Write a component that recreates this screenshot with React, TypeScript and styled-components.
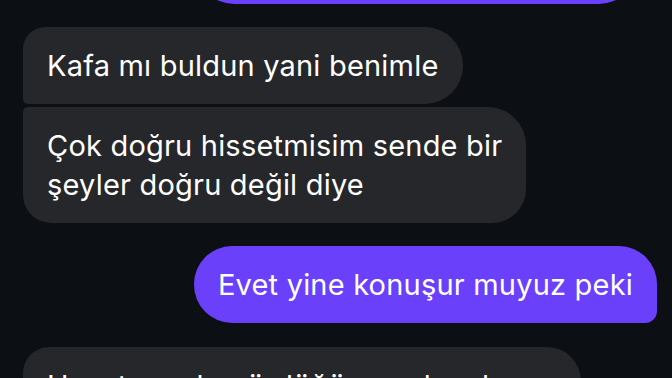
import styled, { createGlobalStyle } from "styled-components";

const GlobalStyle = createGlobalStyle`
  html, body {
    margin: 0;
    padding: 0;
    background: #0c0f13;
    overflow: hidden;
  }
  body {
    font-family: Inter, "Noto Sans", "Liberation Sans", sans-serif;
    -webkit-font-smoothing: antialiased;
  }
`;

type Side = "in" | "out";

type Message = {
  side: Side;
  text: string;
  radius: string;
  gapBefore: number;
  inset?: number;
};

const messages: Message[] = [
  {
    side: "out",
    text: "Tamam, o zaman konuşalım.",
    radius: "38px",
    gapBefore: 0,
    inset: 35,
  },
  {
    side: "in",
    text: "Kafa mı buldun yani benimle",
    radius: "22px 38px 38px 5px",
    gapBefore: 23,
  },
  {
    side: "in",
    text: "Çok doğru hissetmisim sende bir\nşeyler doğru değil diye",
    radius: "5px 38px 34px 28px",
    gapBefore: 3,
  },
  {
    side: "out",
    text: "Evet yine konuşur muyuz peki",
    radius: "38px 38px 12px 38px",
    gapBefore: 23,
    inset: 15,
  },
  {
    side: "in",
    text: "Hayat sende gördüğüne gelecek tabii ki bunu",
    radius: "26px 34px 34px 26px",
    gapBefore: 24,
  },
];

const Thread = styled.div`
  display: flex;
  flex-direction: column;
  margin-top: -73px;
  padding: 0 0 0 23px;
  width: 672px;
  box-sizing: border-box;
`;

const Row = styled.div<{ $side: Side; $gap: number; $inset: number }>`
  display: flex;
  justify-content: ${(p) => (p.$side === "out" ? "flex-end" : "flex-start")};
  margin-top: ${(p) => p.$gap}px;
  padding-right: ${(p) => p.$inset}px;
`;

const Bubble = styled.div<{ $side: Side; $radius: string }>`
  box-sizing: border-box;
  max-width: 558px;
  padding: 19px 24px;
  border-radius: ${(p) => p.$radius};
  background: ${(p) => (p.$side === "out" ? "#6b40fa" : "#26272b")};
  color: #ffffff;
  font-size: 29px;
  line-height: 39px;
  letter-spacing: 0.2px;
  white-space: pre-wrap;
`;

export default function App() {
  return (
    <>
      <GlobalStyle />
      <Thread>
        {messages.map((m, i) => (
          <Row key={i} $side={m.side} $gap={m.gapBefore} $inset={m.inset ?? 0}>
            <Bubble $side={m.side} $radius={m.radius}>
              {m.text}
            </Bubble>
          </Row>
        ))}
      </Thread>
    </>
  );
}
